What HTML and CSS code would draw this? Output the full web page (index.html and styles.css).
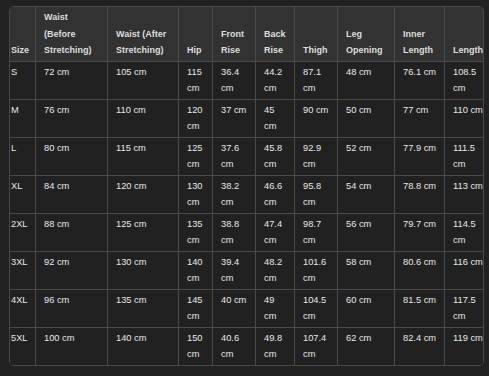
FILE: index.html
```html
<!DOCTYPE html>
<html lang="en">
<head>
  <meta charset="UTF-8" />
  <meta name="viewport" content="width=device-width, initial-scale=1.0" />
  <title>Size Chart</title>
  <link rel="stylesheet" href="styles.css">
</head>
<body>
  <div class="chart">
    <table class="sizes">
      <thead>
        <tr>
          <th class="c-size">Size</th>
          <th class="c-w1">Waist (Before Stretching)</th>
          <th class="c-w2">Waist (After Stretching)</th>
          <th class="c-hip">Hip</th>
          <th class="c-front">Front Rise</th>
          <th class="c-back">Back Rise</th>
          <th class="c-thigh">Thigh</th>
          <th class="c-leg">Leg Opening</th>
          <th class="c-inner">Inner Length</th>
          <th class="c-len">Length</th>
        </tr>
      </thead>
      <tbody>
        <tr><td>S</td><td>72 cm</td><td>105 cm</td><td>115 cm</td><td>36.4 cm</td><td>44.2 cm</td><td>87.1 cm</td><td>48 cm</td><td>76.1 cm</td><td>108.5 cm</td></tr>
        <tr><td>M</td><td>76 cm</td><td>110 cm</td><td>120 cm</td><td>37 cm</td><td>45 cm</td><td>90 cm</td><td>50 cm</td><td>77 cm</td><td>110 cm</td></tr>
        <tr><td>L</td><td>80 cm</td><td>115 cm</td><td>125 cm</td><td>37.6 cm</td><td>45.8 cm</td><td>92.9 cm</td><td>52 cm</td><td>77.9 cm</td><td>111.5 cm</td></tr>
        <tr><td>XL</td><td>84 cm</td><td>120 cm</td><td>130 cm</td><td>38.2 cm</td><td>46.6 cm</td><td>95.8 cm</td><td>54 cm</td><td>78.8 cm</td><td>113 cm</td></tr>
        <tr><td>2XL</td><td>88 cm</td><td>125 cm</td><td>135 cm</td><td>38.8 cm</td><td>47.4 cm</td><td>98.7 cm</td><td>56 cm</td><td>79.7 cm</td><td>114.5 cm</td></tr>
        <tr><td>3XL</td><td>92 cm</td><td>130 cm</td><td>140 cm</td><td>39.4 cm</td><td>48.2 cm</td><td>101.6 cm</td><td>58 cm</td><td>80.6 cm</td><td>116 cm</td></tr>
        <tr><td>4XL</td><td>96 cm</td><td>135 cm</td><td>145 cm</td><td>40 cm</td><td>49 cm</td><td>104.5 cm</td><td>60 cm</td><td>81.5 cm</td><td>117.5 cm</td></tr>
        <tr><td>5XL</td><td>100 cm</td><td>140 cm</td><td>150 cm</td><td>40.6 cm</td><td>49.8 cm</td><td>107.4 cm</td><td>62 cm</td><td>82.4 cm</td><td>119 cm</td></tr>
      </tbody>
    </table>
  </div>
</body>
</html>
```

FILE: styles.css
```css
body {
  margin: 0;
  padding: 6px 5px 0 9px;
  background: #212121;
  font-family: "Liberation Sans", Arial, sans-serif;
  font-size: 9.3px;
  color: #e8e8e8;
}

.chart {
  width: 473px;
  border: 1px solid #4a4a4a;
  border-radius: 5px;
  overflow: hidden;
}

.sizes {
  table-layout: fixed;
  width: 485px;
  border-collapse: separate;
  border-spacing: 0;
}

.sizes th,
.sizes td {
  box-sizing: border-box;
  padding: 2px 6px 2px 8px;
  line-height: 16.5px;
  text-align: left;
  border-right: 1px solid #4a4a4a;
  border-bottom: 1px solid #4a4a4a;
}

.sizes th {
  vertical-align: bottom;
  background: #323232;
  color: #dedede;
  font-size: 9px;
  font-weight: 700;
}

.sizes td {
  vertical-align: top;
  background: #212121;
}

.sizes th:first-child,
.sizes td:first-child {
  padding-left: 1px;
  padding-right: 1px;
}

.sizes tbody tr:last-child td {
  border-bottom: none;
}

.c-size { width: 26px; }
.c-w1 { width: 72px; }
.c-w2 { width: 71px; }
.c-hip { width: 34px; }
.c-front { width: 43px; }
.c-back { width: 39px; }
.c-thigh { width: 43px; }
.c-leg { width: 57px; }
.c-inner { width: 50px; }
.c-len { width: 50px; }
```
